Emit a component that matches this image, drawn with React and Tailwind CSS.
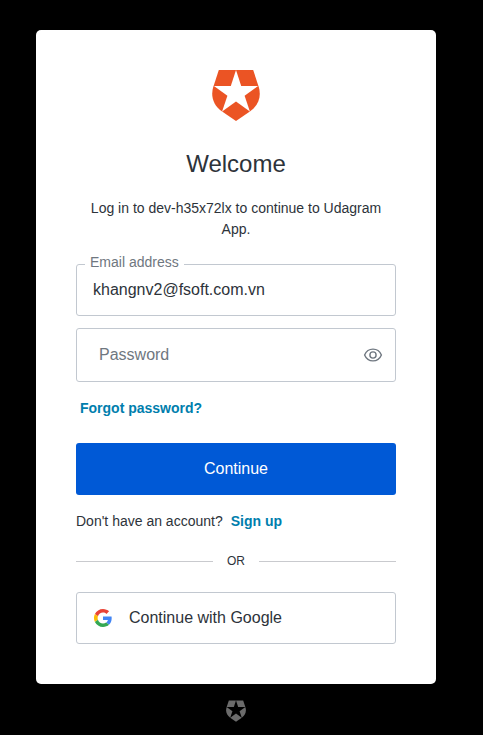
import React from "react";

function Shield({ className }) {
  return (
    <svg viewBox="0 0 48 51" className={className} fill="currentColor" aria-hidden="true">
      <path d="M6.8 0H24L18.8 16H1.6z" />
      <path d="M41.2 0H24L29.2 16H46.4z" />
      <path d="M1.6 15.8L15.4 25.8L10.1 41.6C0.8 35-1.7 25.4 1.6 15.8z" />
      <path d="M46.4 15.8L32.6 25.8L37.9 41.6C47.2 35 49.7 25.4 46.4 15.8z" />
      <path d="M24 31.6L37.9 41.4L24 51L10.1 41.4z" />
    </svg>
  );
}

function GoogleMark() {
  return (
    <svg viewBox="-2.5 -2.5 53 53" className="size-5 shrink-0" aria-hidden="true">
      <path fill="#EA4335" d="M24 9.5c3.54 0 6.71 1.22 9.21 3.6l6.85-6.85C35.9 2.38 30.47 0 24 0 14.62 0 6.51 5.38 2.56 13.22l7.98 6.19C12.43 13.72 17.74 9.5 24 9.5z" />
      <path fill="#4285F4" d="M46.98 24.55c0-1.57-.15-3.09-.38-4.55H24v9.02h12.94c-.58 2.96-2.26 5.48-4.78 7.18l7.73 6c4.51-4.18 7.09-10.36 7.09-17.65z" />
      <path fill="#FBBC05" d="M10.53 28.59c-.48-1.45-.76-2.99-.76-4.59s.27-3.14.76-4.59l-7.98-6.19C.92 16.46 0 20.12 0 24c0 3.88.92 7.54 2.56 10.78l7.97-6.19z" />
      <path fill="#34A853" d="M24 48c6.48 0 11.93-2.13 15.89-5.81l-7.73-6c-2.15 1.45-4.92 2.3-8.16 2.3-6.26 0-11.57-4.22-13.47-9.91l-7.98 6.19C6.51 42.62 14.62 48 24 48z" />
    </svg>
  );
}

function EyeIcon() {
  return (
    <svg viewBox="0 0 20 20" className="size-5" fill="none" stroke="currentColor" strokeWidth="1.4" aria-hidden="true">
      <path d="M1.6 10C3.2 6.2 6.3 4.1 10 4.1s6.8 2.1 8.4 5.9C16.8 13.8 13.7 15.9 10 15.9S3.2 13.8 1.6 10z" />
      <circle cx="10" cy="10" r="3.1" />
    </svg>
  );
}

export default function App() {
  return (
    <div className="flex min-h-screen flex-col items-center bg-black pt-[30px] pr-[47px] pb-3 pl-9 font-['Liberation_Sans',Arial,sans-serif] text-sm text-[#2d333a]">
      <main className="w-full max-w-[400px] rounded-[5px] bg-white p-10">
        <header className="text-center">
          <Shield className="mx-auto h-[51px] w-12 text-[#eb5424]" />
          <h1 className="mt-[25px] text-2xl leading-9">Welcome</h1>
          <p className="mt-4 leading-[21px]">Log in to dev-h35x72lx to continue to Udagram App.</p>
        </header>

        <form className="mt-6" onSubmit={(e) => e.preventDefault()}>
          <div className="relative">
            <label htmlFor="email" className="absolute -top-3 left-[9px] bg-white px-[5px] leading-5 text-[#6f7780]">
              Email address
            </label>
            <input
              id="email"
              type="email"
              defaultValue="khangnv2@fsoft.com.vn"
              className="block h-[52px] w-full rounded-[3px] border border-[#c2c8d0] px-4 text-base outline-none"
            />
          </div>

          <div className="mt-3 flex h-[54px] items-center rounded-[3px] border border-[#c2c8d0] pr-3 pl-[22px]">
            <input
              type="password"
              aria-label="Password"
              placeholder="Password"
              className="w-full min-w-0 flex-1 text-base outline-none placeholder:text-[#6f7780]"
            />
            <button type="button" aria-label="Show password" className="text-[#6f7780]">
              <EyeIcon />
            </button>
          </div>

          <a href="#forgot" className="mt-4 ml-1 block w-fit leading-5 font-bold text-[#007ead]">
            Forgot password?
          </a>

          <button type="submit" className="mt-[25px] h-[52px] w-full rounded-[3px] bg-[#0059d6] text-base text-white">
            Continue
          </button>
        </form>

        <p className="mt-4 flex gap-2 leading-5">
          Don't have an account?
          <a href="#signup" className="font-bold text-[#007ead]">
            Sign up
          </a>
        </p>

        <div className="mt-5 flex items-center text-xs leading-5">
          <hr className="flex-1 border-[#c9cace]" />
          <span className="w-[46px] text-center">OR</span>
          <hr className="flex-1 border-[#c9cace]" />
        </div>

        <button type="button" className="mt-[21px] flex h-[52px] w-full items-center gap-4 rounded-[3px] border border-[#c2c8d0] px-4 text-base">
          <GoogleMark />
          Continue with Google
        </button>
      </main>

      <footer className="mt-4">
        <a href="#auth0" aria-label="Auth0" className="block text-[#6b6b6b]">
          <Shield className="h-[22px] w-5" />
        </a>
      </footer>
    </div>
  );
}
